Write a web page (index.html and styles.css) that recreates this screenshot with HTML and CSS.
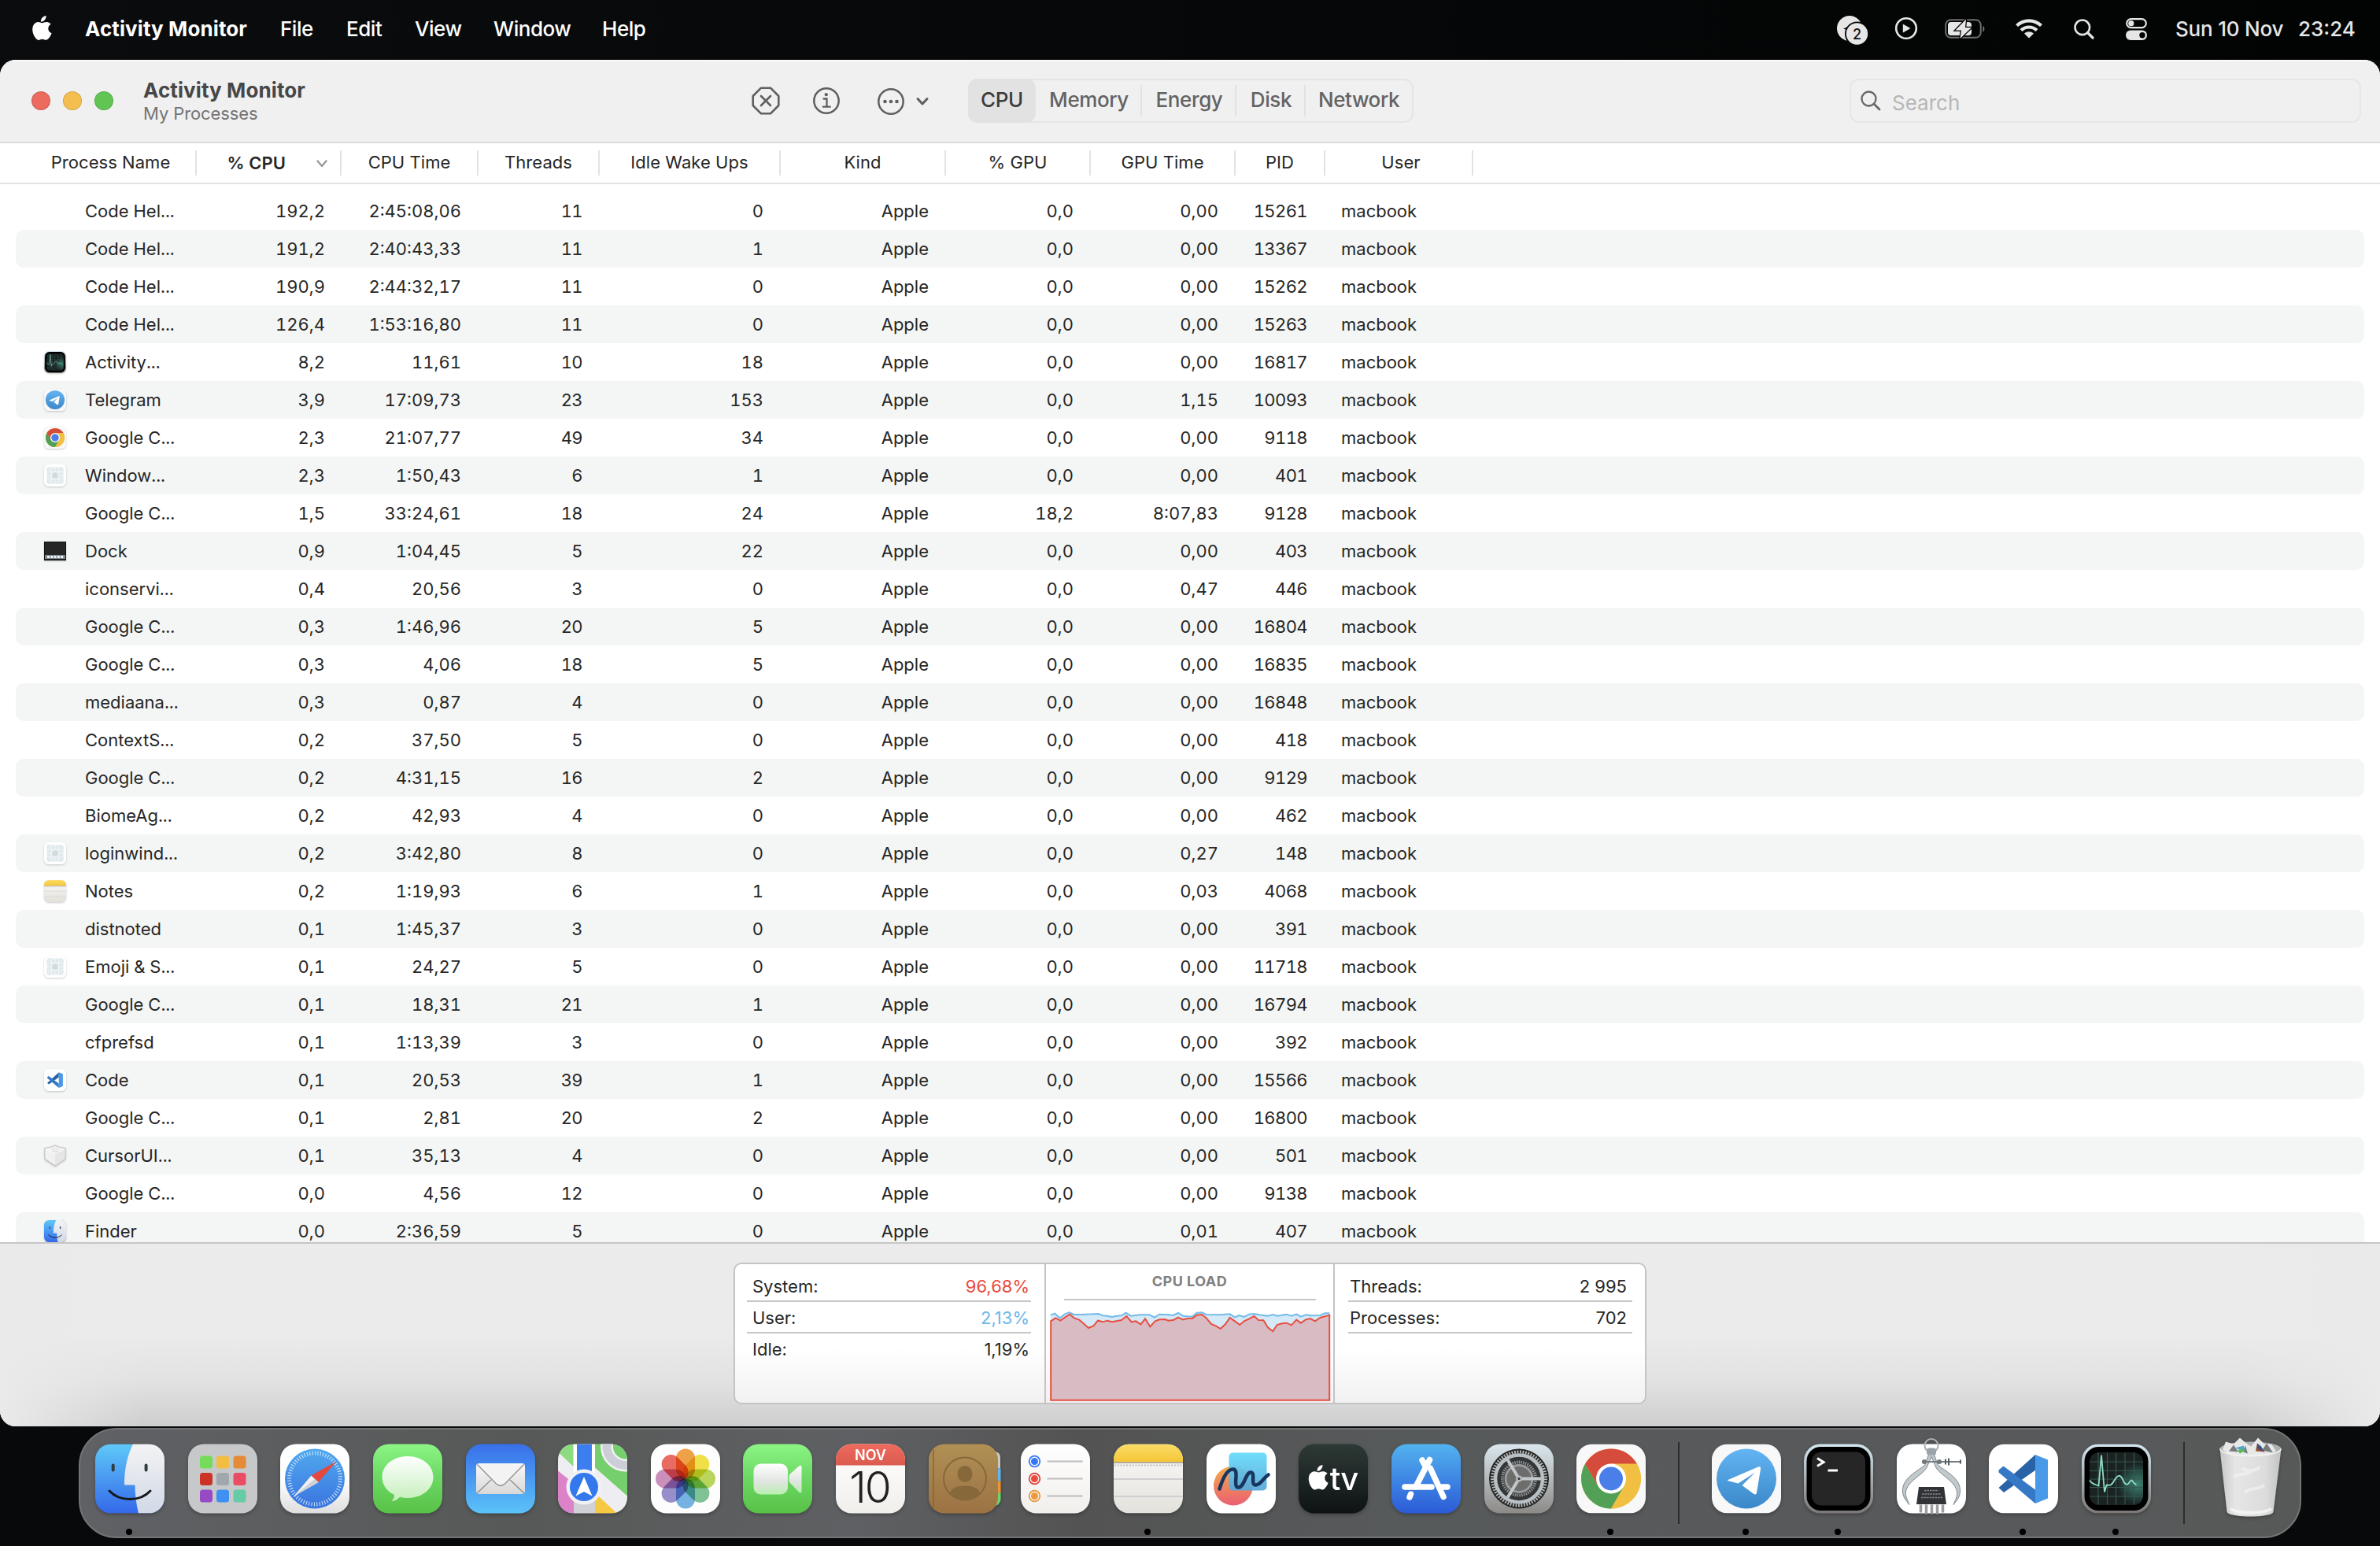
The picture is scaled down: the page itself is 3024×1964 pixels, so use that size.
FILE: index.html
```html
<!DOCTYPE html>
<html lang="en">
<head>
<meta charset="utf-8">
<title>Activity Monitor</title>
<link rel="stylesheet" href="styles.css">
</head>
<body>
<svg class="defs" width="0" height="0" aria-hidden="true">
  <defs>
    <linearGradient id="gFinder" x1="0" y1="0" x2="0" y2="1"><stop offset="0" stop-color="#5fc9f8"/><stop offset="1" stop-color="#3468ea"/></linearGradient>
    <linearGradient id="gFace" x1="0" y1="0" x2="0" y2="1"><stop offset="0" stop-color="#f3f3f4"/><stop offset="1" stop-color="#d0d9e6"/></linearGradient>
    <linearGradient id="gWhite" x1="0" y1="0" x2="0" y2="1"><stop offset=".5" stop-color="#fff"/><stop offset="1" stop-color="#dedede"/></linearGradient>
    <linearGradient id="gPaper" x1="0" y1="0" x2="0" y2="1"><stop offset="0" stop-color="#fff"/><stop offset="1" stop-color="#f1efec"/></linearGradient>
    <linearGradient id="gBlue" x1="0" y1="0" x2="0" y2="1"><stop offset="0" stop-color="#51a9ee"/><stop offset="1" stop-color="#3a74e0"/></linearGradient>
    <linearGradient id="gGreen" x1="0" y1="0" x2="0" y2="1"><stop offset="0" stop-color="#8cf584"/><stop offset=".5" stop-color="#6bd863"/><stop offset="1" stop-color="#58c147"/></linearGradient>
    <linearGradient id="gBubble" x1="0" y1="0" x2="0" y2="1"><stop offset="0" stop-color="#fff"/><stop offset="1" stop-color="#c4efba"/></linearGradient>
    <linearGradient id="gCam" x1="0" y1="0" x2="0" y2="1"><stop offset="0" stop-color="#fff"/><stop offset=".6" stop-color="#dfe4df"/><stop offset="1" stop-color="#b9f0b0"/></linearGradient>
    <linearGradient id="gMail" x1="0" y1="0" x2="0" y2="1"><stop offset="0" stop-color="#386fe9"/><stop offset="1" stop-color="#5bc3f9"/></linearGradient>
    <linearGradient id="gEnv" x1="0" y1="0" x2="0" y2="1"><stop offset="0" stop-color="#f8f8f8"/><stop offset="1" stop-color="#d8d8d8"/></linearGradient>
    <linearGradient id="gCal" x1="0" y1="0" x2="0" y2="1"><stop offset="0" stop-color="#ee6a5c"/><stop offset="1" stop-color="#da5b4f"/></linearGradient>
    <linearGradient id="gBook" x1="0" y1="0" x2="0" y2="1"><stop offset="0" stop-color="#b09055"/><stop offset="1" stop-color="#9c7243"/></linearGradient>
    <linearGradient id="gNote" x1="0" y1="0" x2="0" y2="1"><stop offset="0" stop-color="#fbdc68"/><stop offset="1" stop-color="#f5c636"/></linearGradient>
    <linearGradient id="gNotePaper" x1="0" y1="0" x2="0" y2="1"><stop offset="0" stop-color="#fbfaf9"/><stop offset="1" stop-color="#e2e1dc"/></linearGradient>
    <linearGradient id="gBoard" x1="0" y1="0" x2="0" y2="1"><stop offset="0" stop-color="#66dbfb"/><stop offset="1" stop-color="#57a7d8"/></linearGradient>
    <linearGradient id="gBlob" x1="0" y1="0" x2="0" y2="1"><stop offset="0" stop-color="#f4ab4a"/><stop offset="1" stop-color="#ea5f72"/></linearGradient>
    <linearGradient id="gTv" x1="0" y1="0" x2="0" y2="1"><stop offset="0" stop-color="#2e3a36"/><stop offset="1" stop-color="#0e1214"/></linearGradient>
    <linearGradient id="gStore" x1="0" y1="0" x2="0" y2="1"><stop offset="0" stop-color="#52b3ef"/><stop offset="1" stop-color="#2b5bd7"/></linearGradient>
    <linearGradient id="gGear" x1="0" y1="0" x2="0" y2="1"><stop offset="0" stop-color="#dbe7ee"/><stop offset="1" stop-color="#8c8a87"/></linearGradient>
    <linearGradient id="gTg" x1="0" y1="0" x2="0" y2="1"><stop offset="0" stop-color="#62b4f2"/><stop offset="1" stop-color="#3b88c9"/></linearGradient>
    <linearGradient id="gFrame" x1="0" y1="0" x2="0" y2="1"><stop offset="0" stop-color="#d3e6f0"/><stop offset="1" stop-color="#7b7675"/></linearGradient>
    <linearGradient id="gBin" x1="0" y1="0" x2="1" y2="0"><stop offset="0" stop-color="#c6c6c8"/><stop offset=".25" stop-color="#e6e6e7"/><stop offset=".75" stop-color="#dcdcdd"/><stop offset="1" stop-color="#c2c2c4"/></linearGradient>
    <radialGradient id="gGlow" cx=".9" cy=".6" r=".4"><stop offset="0" stop-color="#3b8374"/><stop offset="1" stop-color="#1a2222"/></radialGradient>

    <path id="applePath" d="M17.6 0c.2 2-.6 3.900-1.800 5.300-1.200 1.400-3.100 2.400-4.900 2.300-.2-1.900.7-3.900 1.800-5.100C14 1.100 16 .1 17.600 0zM23.600 10.700c-2 1.200-3.300 3-3.300 5.500 0 2.900 1.700 5 4.300 6-.6 1.800-1.500 3.500-2.600 5-1.500 2.200-3 3.600-4.700 3.600-1.800 0-2.400-1.100-4.600-1.100-2.200 0-2.900 1.100-4.600 1.200-1.800.1-3.400-1.700-4.800-3.800C.5 23-.8 16.400 1.300 12.300 2.500 9.700 5 8.100 7.500 8.100c2 0 3.700 1.200 5.100 1.200 1.300 0 3.400-1.400 5.900-1.200 1.900.1 3.800.9 5.100 2.600z"/>

    <symbol id="finder" viewBox="0 0 88 88">
      <rect width="88" height="88" rx="20" fill="url(#gFinder)"/>
      <path d="M48 0h20a20 20 0 0 1 20 20v48a20 20 0 0 1-20 20H55c-3-12-4.500-24-4.500-36H38.500c-2 0-1.500-2-1.500-4C37.500 30 41 14 48 0z" fill="url(#gFace)"/>
      <path d="M22.700 27v6M64.600 27v6" stroke="#333b42" stroke-width="4" stroke-linecap="round"/>
      <path d="M18 59.500c13 14 39 14 52 0" fill="none" stroke="#16181c" stroke-width="3" stroke-linecap="round"/>
    </symbol>
    <symbol id="telegram" viewBox="0 0 88 88">
      <rect width="88" height="88" rx="20" fill="#f8f8f8"/>
      <circle cx="44" cy="44" r="38" fill="url(#gTg)"/>
      <path d="M20.500 45.500 59 29c2-1 3.500.3 3 2.800l-5 30c-.5 2.400-2 2.800-3.800 1.500L38.500 52.500 55 36 33.500 50l-12.500-3.300c-1-.3-1.300-.9-.5-1.200z" fill="#fff"/>
    </symbol>
    <symbol id="chrome" viewBox="0 0 88 88">
      <rect width="88" height="88" rx="20" fill="#f8f8f8"/>
      <circle cx="44" cy="44" r="38" fill="#f1bf42"/>
      <path d="M44 44 11.100 25A38 38 0 0 1 76.900 25z" fill="#d64c3c"/>
      <path d="M11.100 25A38 38 0 0 0 44 82l16.500-28.500L44 44l-16.500 9.500z" fill="#529f56"/>
      <path d="M44 82a38 38 0 0 0 32.900-57H44v19l16.500 9.500z" fill="#f1bf42"/>
      <path d="M11.100 25 27.500 53.500 44 44V25z" fill="#d64c3c"/>
      <circle cx="44" cy="44" r="19" fill="#fff"/><circle cx="44" cy="44" r="15" fill="#4a7ee8"/>
    </symbol>
    <symbol id="notes" viewBox="0 0 88 88">
      <rect width="88" height="88" rx="20" fill="url(#gNotePaper)"/>
      <path d="M0 23v-3A20 20 0 0 1 20 0h48a20 20 0 0 1 20 20v3z" fill="url(#gNote)"/>
      <path d="M0 23.500h88" stroke="#9c9688" stroke-width="1.500"/>
      <path d="M1 27h86" stroke="#b9b9b7" stroke-width="1.800" stroke-dasharray="1.800 2"/>
      <path d="M0 44.500h88M0 66.500h88" stroke="#cfcfd2" stroke-width="1.800"/>
    </symbol>
    <symbol id="vscode" viewBox="0 0 88 88">
      <rect width="88" height="88" rx="20" fill="#fff"/>
      <path d="M12.500 55.500 59 13.500v19.700L19 61.500z" fill="#2962a6"/>
      <path d="M12.500 33 18.500 28 59 58v17.500L12.500 36z" fill="#3478c6"/>
      <path d="M59 13.500 75 20v49l-16 6.500z" fill="#489ae9"/>
    </symbol>
    <symbol id="monitor" viewBox="0 0 88 88">
      <rect width="88" height="88" rx="21" fill="url(#gFrame)"/>
      <rect x="3.500" y="3.500" width="81" height="81" rx="18" fill="#000"/>
      <rect x="10" y="10.500" width="68" height="67" rx="12" fill="url(#gGlow)"/>
      <path d="M21 11v66M32.500 11v66M43.500 11v66M55 11v66M66.500 11v66M10 22.500h68M10 34h68M10 44.500h68M10 55h68M10 66.500h68" stroke="#36584f" stroke-width="1.200"/>
      <path d="M10 46c3 5 6 5 11.500 7L25 14l4 47 2.500-9c5 1 7 0 10-6 5-8 8-8 12 2 3 5 5 4 8-.5 3-5 4 4 8 4" fill="none" stroke="#8fdcc6" stroke-width="1.800"/>
    </symbol>
    <symbol id="generic" viewBox="0 0 28 28">
      <rect width="28" height="28" rx="6" fill="#fff"/>
      <rect x="3.500" y="3.500" width="21" height="21" rx="1.500" fill="#dde6e9"/>
      <g fill="none" stroke="#f3f8f9" stroke-width=".8"><circle cx="14" cy="14" r="9.500"/><circle cx="14" cy="14" r="6"/><path d="M3.500 9.500h21M3.500 18.500h21M9.500 3.500v21M18.500 3.500v21M14 3.500v21M3.500 14h21M3.500 3.500l21 21M24.500 3.500l-21 21"/></g>
      <circle cx="14" cy="14" r="3.600" fill="#cfdcdf"/>
    </symbol>
    <symbol id="dockproc" viewBox="0 0 28 28">
      <rect x=".5" y="2.500" width="27" height="23" fill="#262627" stroke="#111"/>
      <rect x="1" y="19" width="26" height="5" fill="#7c848c"/>
      <path d="M4 21.500h21" stroke="#f1f4f6" stroke-width="3" stroke-dasharray="3 1.300"/>
    </symbol>
    <symbol id="brick" viewBox="0 0 30 30">
      <path d="M1 5 11 3l4-2 4 2 10 2v14.500L15 29 1 19.500z" fill="#f1f1f1" stroke="#c4c4c4" stroke-width="1.200" stroke-linejoin="round"/>
      <path d="M15 12v16.500L28 19V6z" fill="#e6e6e6"/><path d="M2 6 15 12 28 6" fill="none" stroke="#fff"/>
      <ellipse cx="15" cy="8" rx="4.500" ry="2.500" fill="#d9d9d9"/><path d="M11 4v4c2 2 6 2 8 0V4z" fill="#ececec"/>
    </symbol>
  </defs>
</svg>

<header class="menubar">
  <svg class="apple" viewBox="0 0 26 31"><use href="#applePath" fill="#fff"/></svg>
  <nav class="menus"><b class="m-app">Activity Monitor</b><span class="m-file">File</span><span class="m-edit">Edit</span><span class="m-view">View</span><span class="m-window">Window</span><span>Help</span></nav>
  <div class="status">
    <svg class="s-tg" viewBox="0 0 42 38"><circle cx="17" cy="17" r="16" fill="#e6e6e6"/><path d="M9 17.500 26 10.500l-3 9-5 1-1 6-2-7z" fill="#050505"/><circle cx="26.500" cy="24" r="15.500" fill="#050505"/><circle cx="26.500" cy="24" r="13.700" fill="#e6e6e6"/><text x="26.500" y="30.500" text-anchor="middle" font-size="18" class="svgtext" fill="#111">2</text></svg>
    <svg class="s-play" viewBox="0 0 30 30"><circle cx="15" cy="15" r="12.800" fill="none" stroke="#e6e6e6" stroke-width="2.600"/><path d="M10.800 9.500v11L20.500 15z" fill="#e6e6e6"/></svg>
    <svg class="s-bat" viewBox="0 0 52 26"><rect x="1.200" y="1.200" width="44.500" height="22.600" rx="6.500" fill="none" stroke="#6f6f6f" stroke-width="2"/><path d="M48.500 9v7.500c2.500-.8 2.500-6.700 0-7.500z" fill="#7c7c7c"/><rect x="4" y="4" width="30" height="17" rx="4" fill="#e6e6e6"/><path d="M27 .5 13.500 14.500h7.500L19.500 25 34 11h-8z" fill="#e6e6e6" stroke="#050505" stroke-width="2.600" paint-order="stroke"/></svg>
    <svg class="s-wifi" viewBox="0 0 36 26"><path d="M2.500 9.500a22.500 22.500 0 0 1 31 0M8 15.500a14.500 14.500 0 0 1 20 0" fill="none" stroke="#e6e6e6" stroke-width="4.200"/><path d="M12 19.600a9 9 0 0 1 12 0l-6 6z" fill="#e6e6e6"/></svg>
    <svg class="s-find" viewBox="0 0 26 26"><circle cx="10.800" cy="10.800" r="9.300" fill="none" stroke="#e6e6e6" stroke-width="2.600"/><path d="m17.500 17.500 6.500 6.500" stroke="#e6e6e6" stroke-width="3.200" stroke-linecap="round"/></svg>
    <svg class="s-cc" viewBox="0 0 27 28"><rect x="1.200" y="1.200" width="24.600" height="11" rx="5.500" fill="none" stroke="#e6e6e6" stroke-width="2.200"/><circle cx="6.800" cy="6.700" r="3.600" fill="#e6e6e6"/><rect y="15.500" width="27" height="12.500" rx="6.200" fill="#e6e6e6"/><circle cx="21" cy="21.700" r="3.700" fill="#050505"/></svg>
    <span class="date">Sun 10 Nov</span><span class="time">23:24</span>
  </div>
</header>

<main class="window">
  <div class="toolbar">
    <div class="lights"><i class="red"></i><i class="yellow"></i><i class="green"></i></div>
    <div class="titles"><h1>Activity Monitor</h1><p>My Processes</p></div>
    <div class="actions">
      <svg class="a-stop" viewBox="0 0 36 36"><path d="M12 1.700h12L34.300 12v12L24 34.300H12L1.700 24V12z" fill="none" stroke="#5f5f5f" stroke-width="2.600" stroke-linejoin="round"/><path d="m12 12 12 12M24 12 12 24" stroke="#5f5f5f" stroke-width="2.600" stroke-linecap="round"/></svg>
      <svg class="a-info" viewBox="0 0 36 36"><circle cx="18" cy="18" r="15.700" fill="none" stroke="#5f5f5f" stroke-width="2.500"/><circle cx="17.800" cy="10.200" r="2.100" fill="#5f5f5f"/><path d="M14.500 15.500h4v10M13.800 25.700h9" fill="none" stroke="#5f5f5f" stroke-width="2.300" stroke-linecap="round"/></svg>
      <svg class="a-more" viewBox="0 0 36 36"><circle cx="18" cy="18" r="15.700" fill="none" stroke="#5f5f5f" stroke-width="2.500"/><g fill="#5f5f5f"><circle cx="10.500" cy="18" r="2.300"/><circle cx="18" cy="18" r="2.300"/><circle cx="25.500" cy="18" r="2.300"/></g></svg>
      <svg class="a-chev" viewBox="0 0 16 12"><path d="m2 2.500 6 6.500 6-6.500" fill="none" stroke="#5f5f5f" stroke-width="3" stroke-linecap="round" stroke-linejoin="round"/></svg>
    </div>
    <div class="tabs"><span class="t-cpu">CPU</span><span class="t-mem">Memory</span><span class="t-en">Energy</span><span class="t-disk">Disk</span><span class="t-net">Network</span></div>
    <div class="search"><svg viewBox="0 0 26 26"><circle cx="10.500" cy="10.500" r="9" fill="none" stroke="#666" stroke-width="2.300"/><path d="m17 17 7 7" stroke="#666" stroke-width="2.800" stroke-linecap="round"/></svg><span>Search</span></div>
  </div>

  <div class="thead">
    <span class="h-name">Process Name</span><span class="h-sort"><b>% CPU</b><svg viewBox="0 0 14 10"><path d="m1.500 1.500 5.500 6.500 5.500-6.500" fill="none" stroke="#9a9a9a" stroke-width="2.400" stroke-linecap="round" stroke-linejoin="round"/></svg></span><span>CPU Time</span><span>Threads</span><span>Idle Wake Ups</span><span>Kind</span><span>% GPU</span><span>GPU Time</span><span>PID</span><span class="h-user">User</span>
  </div>

  <div class="rows">
    <div class="row"><div class="name"><i></i>Code Hel...</div><span>192,2</span><span>2:45:08,06</span><span>11</span><span>0</span><span>Apple</span><span>0,0</span><span>0,00</span><span>15261</span><em>macbook</em></div>
    <div class="row"><div class="name"><i></i>Code Hel...</div><span>191,2</span><span>2:40:43,33</span><span>11</span><span>1</span><span>Apple</span><span>0,0</span><span>0,00</span><span>13367</span><em>macbook</em></div>
    <div class="row"><div class="name"><i></i>Code Hel...</div><span>190,9</span><span>2:44:32,17</span><span>11</span><span>0</span><span>Apple</span><span>0,0</span><span>0,00</span><span>15262</span><em>macbook</em></div>
    <div class="row"><div class="name"><i></i>Code Hel...</div><span>126,4</span><span>1:53:16,80</span><span>11</span><span>0</span><span>Apple</span><span>0,0</span><span>0,00</span><span>15263</span><em>macbook</em></div>
    <div class="row"><div class="name"><i><svg><use href="#monitor"/></svg></i>Activity...</div><span>8,2</span><span>11,61</span><span>10</span><span>18</span><span>Apple</span><span>0,0</span><span>0,00</span><span>16817</span><em>macbook</em></div>
    <div class="row"><div class="name"><i><svg><use href="#telegram"/></svg></i>Telegram</div><span>3,9</span><span>17:09,73</span><span>23</span><span>153</span><span>Apple</span><span>0,0</span><span>1,15</span><span>10093</span><em>macbook</em></div>
    <div class="row"><div class="name"><i><svg><use href="#chrome"/></svg></i>Google C...</div><span>2,3</span><span>21:07,77</span><span>49</span><span>34</span><span>Apple</span><span>0,0</span><span>0,00</span><span>9118</span><em>macbook</em></div>
    <div class="row"><div class="name"><i><svg><use href="#generic"/></svg></i>Window...</div><span>2,3</span><span>1:50,43</span><span>6</span><span>1</span><span>Apple</span><span>0,0</span><span>0,00</span><span>401</span><em>macbook</em></div>
    <div class="row"><div class="name"><i></i>Google C...</div><span>1,5</span><span>33:24,61</span><span>18</span><span>24</span><span>Apple</span><span>18,2</span><span>8:07,83</span><span>9128</span><em>macbook</em></div>
    <div class="row"><div class="name"><i><svg><use href="#dockproc"/></svg></i>Dock</div><span>0,9</span><span>1:04,45</span><span>5</span><span>22</span><span>Apple</span><span>0,0</span><span>0,00</span><span>403</span><em>macbook</em></div>
    <div class="row"><div class="name"><i></i>iconservi...</div><span>0,4</span><span>20,56</span><span>3</span><span>0</span><span>Apple</span><span>0,0</span><span>0,47</span><span>446</span><em>macbook</em></div>
    <div class="row"><div class="name"><i></i>Google C...</div><span>0,3</span><span>1:46,96</span><span>20</span><span>5</span><span>Apple</span><span>0,0</span><span>0,00</span><span>16804</span><em>macbook</em></div>
    <div class="row"><div class="name"><i></i>Google C...</div><span>0,3</span><span>4,06</span><span>18</span><span>5</span><span>Apple</span><span>0,0</span><span>0,00</span><span>16835</span><em>macbook</em></div>
    <div class="row"><div class="name"><i></i>mediaana...</div><span>0,3</span><span>0,87</span><span>4</span><span>0</span><span>Apple</span><span>0,0</span><span>0,00</span><span>16848</span><em>macbook</em></div>
    <div class="row"><div class="name"><i></i>ContextS...</div><span>0,2</span><span>37,50</span><span>5</span><span>0</span><span>Apple</span><span>0,0</span><span>0,00</span><span>418</span><em>macbook</em></div>
    <div class="row"><div class="name"><i></i>Google C...</div><span>0,2</span><span>4:31,15</span><span>16</span><span>2</span><span>Apple</span><span>0,0</span><span>0,00</span><span>9129</span><em>macbook</em></div>
    <div class="row"><div class="name"><i></i>BiomeAg...</div><span>0,2</span><span>42,93</span><span>4</span><span>0</span><span>Apple</span><span>0,0</span><span>0,00</span><span>462</span><em>macbook</em></div>
    <div class="row"><div class="name"><i><svg><use href="#generic"/></svg></i>loginwind...</div><span>0,2</span><span>3:42,80</span><span>8</span><span>0</span><span>Apple</span><span>0,0</span><span>0,27</span><span>148</span><em>macbook</em></div>
    <div class="row"><div class="name"><i><svg><use href="#notes"/></svg></i>Notes</div><span>0,2</span><span>1:19,93</span><span>6</span><span>1</span><span>Apple</span><span>0,0</span><span>0,03</span><span>4068</span><em>macbook</em></div>
    <div class="row"><div class="name"><i></i>distnoted</div><span>0,1</span><span>1:45,37</span><span>3</span><span>0</span><span>Apple</span><span>0,0</span><span>0,00</span><span>391</span><em>macbook</em></div>
    <div class="row"><div class="name"><i><svg><use href="#generic"/></svg></i>Emoji &amp; S...</div><span>0,1</span><span>24,27</span><span>5</span><span>0</span><span>Apple</span><span>0,0</span><span>0,00</span><span>11718</span><em>macbook</em></div>
    <div class="row"><div class="name"><i></i>Google C...</div><span>0,1</span><span>18,31</span><span>21</span><span>1</span><span>Apple</span><span>0,0</span><span>0,00</span><span>16794</span><em>macbook</em></div>
    <div class="row"><div class="name"><i></i>cfprefsd</div><span>0,1</span><span>1:13,39</span><span>3</span><span>0</span><span>Apple</span><span>0,0</span><span>0,00</span><span>392</span><em>macbook</em></div>
    <div class="row"><div class="name"><i><svg><use href="#vscode"/></svg></i>Code</div><span>0,1</span><span>20,53</span><span>39</span><span>1</span><span>Apple</span><span>0,0</span><span>0,00</span><span>15566</span><em>macbook</em></div>
    <div class="row"><div class="name"><i></i>Google C...</div><span>0,1</span><span>2,81</span><span>20</span><span>2</span><span>Apple</span><span>0,0</span><span>0,00</span><span>16800</span><em>macbook</em></div>
    <div class="row"><div class="name"><i><svg><use href="#brick"/></svg></i>CursorUI...</div><span>0,1</span><span>35,13</span><span>4</span><span>0</span><span>Apple</span><span>0,0</span><span>0,00</span><span>501</span><em>macbook</em></div>
    <div class="row"><div class="name"><i></i>Google C...</div><span>0,0</span><span>4,56</span><span>12</span><span>0</span><span>Apple</span><span>0,0</span><span>0,00</span><span>9138</span><em>macbook</em></div>
    <div class="row"><div class="name"><i><svg><use href="#finder"/></svg></i>Finder</div><span>0,0</span><span>2:36,59</span><span>5</span><span>0</span><span>Apple</span><span>0,0</span><span>0,01</span><span>407</span><em>macbook</em></div>
  </div>

  <footer class="summary">
    <div class="card">
      <div class="stats left">
        <div class="stat"><span>System:</span><span class="sys">96,68%</span></div>
        <div class="stat"><span>User:</span><span class="usr">2,13%</span></div>
        <div class="stat last"><span>Idle:</span><span>1,19%</span></div>
      </div>
      <div class="load">
        <h2>CPU LOAD</h2>
        <svg viewBox="549 318 450 342" preserveAspectRatio="none">
          <path d="M550 332 557 326 565 343 573 328 580 322 588 330 600 330 627 327 634 334 641 335 649 339 656 335 664 334 671 323 679 335 694 331 709 331 717 341 725 329 740 331 747 333 755 324 763 335 777 338 785 323 793 322 800 330 823 331 838 328 846 340 853 333 861 339 869 329 877 327 885 331 899 335 907 330 914 335 929 329 937 335 945 329 952 338 960 331 968 334 983 333 991 325 998 325V658H550z" fill="#d5e9f7"/>
          <path d="M550 332 557 326 565 343 573 328 580 322 588 330 600 330 627 327 634 334 641 335 649 339 656 335 664 334 671 323 679 335 694 331 709 331 717 341 725 329 740 331 747 333 755 324 763 335 777 338 785 323 793 322 800 330 823 331 838 328 846 340 853 333 861 339 869 329 877 327 885 331 899 335 907 330 914 335 929 329 937 335 945 329 952 338 960 331 968 334 983 333 991 325 998 325" class="line blue"/>
          <path d="M550.500 355 558 343 566 353 573 341 581 329 588 343 596 350 604 366 611 381 619 373 626 353 634 358 641 353 649 358 664 351 672 336 680 358 687 355 695 367 702 346 710 376 718 355 725 349 733 348 740 353 748 350 755 341 763 349 770 345 778 344 785 332 793 330 800 343 808 366 816 374 823 384 831 366 838 342 846 355 854 369 861 355 869 346 877 336 884 351 892 352 899 379 907 394 914 369 922 364 929 362 937 370 945 350 952 362 960 349 967 345 975 355 983 342 991 337 998 332V656.500H550.500z" fill="#d9bcc3" class="line crimson"/>
        </svg>
      </div>
      <div class="stats right">
        <div class="stat"><span>Threads:</span><span>2 995</span></div>
        <div class="stat"><span>Processes:</span><span>702</span></div>
      </div>
    </div>
  </footer>
</main>

<div class="dock">
  <div class="app on"><svg viewBox="0 0 88 88"><use href="#finder"/></svg></div>
  <div class="app"><svg viewBox="0 0 88 88"><rect width="88" height="88" rx="20" fill="#c7c8ca"/><rect x="15" y="15" width="16" height="16" rx="3.500" fill="#76db59"/><rect x="36" y="15" width="16" height="16" rx="3.500" fill="#f3bd42"/><rect x="57.500" y="15" width="16" height="16" rx="3.500" fill="#e58a36"/><rect x="15" y="36.500" width="16" height="16" rx="3.500" fill="#cc3327"/><rect x="36" y="36.500" width="16" height="16" rx="3.500" fill="#a0a8ad"/><rect x="57.500" y="36.500" width="16" height="16" rx="3.500" fill="#ea4d63"/><rect x="15" y="58" width="16" height="16" rx="3.500" fill="#964ac5"/><rect x="36" y="58" width="16" height="16" rx="3.500" fill="#3f91f1"/><rect x="57.500" y="58" width="16" height="16" rx="3.500" fill="#67cba7"/></svg></div>
  <div class="app"><svg viewBox="0 0 88 88"><rect width="88" height="88" rx="20" fill="url(#gWhite)"/><circle cx="44" cy="44" r="38" fill="url(#gBlue)"/><circle cx="44" cy="44" r="32.500" fill="none" stroke="#d5e9fb" stroke-width="5" stroke-dasharray="1 2.400"/><path d="M71.500 22 48.500 48.500 39.500 40z" fill="#e4493b"/><path d="M17 66.500 39.500 40l9 8.500z" fill="#f1f1f1"/><path d="M17 66.500 44 44.300l4.500 4.200z" fill="#cfd2d6"/></svg></div>
  <div class="app"><svg viewBox="0 0 88 88"><rect width="88" height="88" rx="20" fill="url(#gGreen)"/><path d="M44 15.500c18.500 0 32.500 11.500 32.500 26.500S62.500 68.500 44 68.500c-3.500 0-6.800-.4-9.900-1.200-2.700 3-6.300 5-10.600 5.400 2.300-2.400 3.500-5 3.600-8.200C17.500 60 11.500 51.500 11.500 42c0-15 14-26.500 32.500-26.500z" fill="url(#gBubble)"/></svg></div>
  <div class="app"><svg viewBox="0 0 88 88"><rect width="88" height="88" rx="20" fill="url(#gMail)"/><rect x="13" y="24.500" width="62" height="39" rx="4" fill="url(#gEnv)"/><path d="m14 62.500 18-17M74 62.500l-18-17" stroke="#8f8f8f" stroke-width="1.300"/><path d="m14.500 26 24 24.500c3.500 3 7.500 3 11 0l24-24.500" fill="#f3f3f3" stroke="#979797" stroke-width="1.500"/></svg></div>
  <div class="app"><svg viewBox="0 0 88 88"><clipPath id="mapClip"><rect width="88" height="88" rx="20"/></clipPath><g clip-path="url(#mapClip)"><rect width="88" height="88" fill="#eeeef2"/><path d="M0 0h20v29L0 10z" fill="#8ddb80"/><path d="M46 0h42v66L46 29z" fill="#76cf6d"/><path d="M0 34 20 50v38H0z" fill="#dc82c8"/><path d="M47 62l28 26H47z" fill="#f5ca42"/><path d="M20 50h27v38H20z" fill="#cfd1d6"/><path d="M19.500 0H47v50H19.500z" fill="#fff"/><path d="M24 0h19v45H24z" fill="#3c7df0"/><circle cx="86" cy="3" r="24" fill="none" stroke="#f1f1f4" stroke-width="16"/><circle cx="86" cy="3" r="24" fill="none" stroke="#cdcfd8" stroke-width="11"/></g><circle cx="33" cy="54.500" r="22.500" fill="#f0f1f5"/><circle cx="33" cy="54.500" r="18" fill="#3478ee"/><path d="M33 41.500 43.500 66 33 60.500 22.500 66z" fill="#fff"/></svg></div>
  <div class="app"><svg viewBox="0 0 88 88"><rect width="88" height="88" rx="20" fill="#fdfdfd"/><g class="petals"><rect x="32" y="6" width="24" height="38" rx="12" fill="#f09a37"/><rect x="32" y="6" width="24" height="38" rx="12" fill="#f0e03a" transform="rotate(45 44 44)"/><rect x="32" y="6" width="24" height="38" rx="12" fill="#b5d44f" transform="rotate(90 44 44)"/><rect x="32" y="6" width="24" height="38" rx="12" fill="#74bf8d" transform="rotate(135 44 44)"/><rect x="32" y="6" width="24" height="38" rx="12" fill="#6aaee2" transform="rotate(180 44 44)"/><rect x="32" y="6" width="24" height="38" rx="12" fill="#8f86c8" transform="rotate(225 44 44)"/><rect x="32" y="6" width="24" height="38" rx="12" fill="#c886b8" transform="rotate(270 44 44)"/><rect x="32" y="6" width="24" height="38" rx="12" fill="#ea6055" transform="rotate(315 44 44)"/></g></svg></div>
  <div class="app"><svg viewBox="0 0 88 88"><rect width="88" height="88" rx="20" fill="url(#gGreen)"/><rect x="13.500" y="25" width="43.500" height="39" rx="9" fill="url(#gCam)"/><path d="M58.500 42c0-2 .5-3 2-4.500L71 28c2-1.500 3.500-1 3.500 1v31c0 2-1.500 2.500-3.500 1L60.500 50c-1.500-1.500-2-2.500-2-4z" fill="url(#gCam)"/></svg></div>
  <div class="app"><svg viewBox="0 0 88 88"><rect width="88" height="88" rx="20" fill="url(#gPaper)"/><path d="M0 27v-7A20 20 0 0 1 20 0h48a20 20 0 0 1 20 20v7z" fill="url(#gCal)"/><text x="44" y="20.500" text-anchor="middle" class="svgtext nov">NOV</text><text x="43" y="74" text-anchor="middle" class="svgtext ten">10</text></svg></div>
  <div class="app"><svg viewBox="0 0 88 88"><path d="M78 10h8c3 1 5 3 5 7v14H78z" fill="#c9c8c2"/><path d="M78 31h13.500v16H78z" fill="#62b5ee"/><path d="M78 47h13.500v15H78z" fill="#ef9432"/><path d="M78 62h13.500v7c0 5-3 8-5.500 9h-8z" fill="#6ed565"/><rect width="88" height="88" rx="20" fill="url(#gBook)"/><path d="M6 7v74" stroke="#886538" stroke-width="1.500"/><circle cx="46" cy="44" r="27" fill="none" stroke="#86683a" stroke-width="2"/><ellipse cx="46" cy="38" rx="9.500" ry="10.500" fill="#86683a"/><path d="M27 62c2-6 9-9 19-9s17 3 19 9c-9 12-29 12-38 0z" fill="#86683a"/></svg></div>
  <div class="app"><svg viewBox="0 0 88 88"><rect width="88" height="88" rx="20" fill="url(#gPaper)"/><g fill="none" stroke-width="1.800"><circle cx="17.500" cy="22" r="6.800" stroke="#3478f6"/><circle cx="17.500" cy="44" r="6.800" stroke="#dd4437"/><circle cx="17.500" cy="66" r="6.800" stroke="#e8963a"/></g><circle cx="17.500" cy="22" r="4.500" fill="#3478f6"/><circle cx="17.500" cy="44" r="4.500" fill="#ea4b3c"/><circle cx="17.500" cy="66" r="4.500" fill="#ef9a38"/><path d="M33.500 22h45M33.500 44h45M33.500 66h45" stroke="#bcbcbd" stroke-width="2"/></svg></div>
  <div class="app on"><svg viewBox="0 0 88 88"><use href="#notes"/></svg></div>
  <div class="app"><svg viewBox="0 0 88 88"><rect width="88" height="88" rx="20" fill="#fff"/><circle cx="34" cy="53" r="25" fill="url(#gBlob)"/><rect x="28.500" y="11" width="48" height="48" rx="5" fill="url(#gBoard)" opacity=".93"/><path d="M16.500 57c4-13 10-25 17-25 9 0-1 23 7 23 8 0 9-20 16-19 6 1-1 16 6 16 6 0 9-8 16-13" fill="none" stroke="#17355e" stroke-width="4.500" stroke-linecap="round" stroke-linejoin="round"/></svg></div>
  <div class="app"><svg viewBox="0 0 88 88"><rect width="88" height="88" rx="20" fill="url(#gTv)"/><use href="#applePath" fill="#fff" transform="translate(12.500 26.500) scale(1.020)"/><text x="57.500" y="58" text-anchor="middle" class="svgtext tv">tv</text></svg></div>
  <div class="app"><svg viewBox="0 0 88 88"><rect width="88" height="88" rx="20" fill="url(#gStore)"/><g stroke="#fff" stroke-width="7.500" stroke-linecap="round"><path d="M39 20.500 43 28M49.500 31 66 67M48.500 20 32 52M24.500 63.500l-1.500 4M17 54.500h34M64 54.500h7"/></g></svg></div>
  <div class="app"><svg viewBox="0 0 88 88"><rect width="88" height="88" rx="20" fill="url(#gGear)"/><circle cx="44" cy="44" r="38" fill="#252525"/><circle cx="44" cy="44" r="34" fill="none" stroke="#b9bcbd" stroke-width="4" stroke-dasharray="1.800 1.700"/><circle cx="44" cy="44" r="30" fill="#333536" stroke="#b9c0c3" stroke-width="4.500"/><circle cx="44" cy="44" r="21" fill="none" stroke="#92979a" stroke-width="4" stroke-dasharray="1.500 1.300"/><circle cx="44" cy="44" r="17" fill="#6d6d6c" stroke="#999c9e" stroke-width="3"/><path d="M44 44h28M44 44 29.500 20M44 44 29.500 68" stroke="#c2c7c9" stroke-width="4"/><circle cx="44" cy="44" r="4" fill="#b3b8ba"/><circle cx="44" cy="44" r="1.500" fill="#333"/></svg></div>
  <div class="app on"><svg viewBox="0 0 88 88"><use href="#chrome"/></svg></div>
  <i class="sep"></i>
  <div class="app on"><svg viewBox="0 0 88 88"><use href="#telegram"/></svg></div>
  <div class="app on"><svg viewBox="0 0 88 88"><rect width="88" height="88" rx="21" fill="url(#gFrame)"/><rect x="3.500" y="3.500" width="81" height="81" rx="18" fill="#000"/><rect x="10" y="10" width="68" height="68" rx="12" fill="#262627"/><path d="m17 18 8 5-8 5" fill="none" stroke="#fff" stroke-width="3"/><path d="M30.500 33.500h12.500" stroke="#fff" stroke-width="3"/></svg></div>
  <div class="app"><svg viewBox="0 0 88 88"><rect width="88" height="88" rx="20" fill="#fff"/><circle cx="44" cy="2" r="8.500" fill="none" stroke="#a9b1b6" stroke-width="2"/><path d="M41 12 36 26C28 34 8 42 7.500 58 7 67 12 72 16 77c-3-7-6-12-4-19C16 46 34 38 38 30l6-14 6 14c4 8 22 16 26 28 2 7-1 12-4 19 4-5 9-10 8.500-19C80 42 60 34 52 26L47 12z" fill="#c1c9cd" stroke="#7e878c" stroke-width="1"/><path d="M32 22.500h50" stroke="#777f84" stroke-width="1.800"/><circle cx="35" cy="22.500" r="3" fill="#70787d"/><circle cx="54" cy="22.500" r="3" fill="#70787d"/><path d="M62 19v7M66 18v9M81 20v5" stroke="#555d61" stroke-width="2"/><rect x="38" y="5" width="12" height="9" rx="3" fill="#9aa4aa"/><path d="M28 54.500h32l3 22H25z" fill="#313336"/><path d="M35 59h18M32 63.500h24M31 68h27" stroke="#85888b" stroke-width="1.300" stroke-dasharray="2.500 1"/><path d="M30.500 77v10M37.500 77v12M44.500 77v12M51.500 77v12M58.500 77v10" stroke="#9b9da0" stroke-width="3.500"/></svg></div>
  <div class="app on"><svg viewBox="0 0 88 88"><use href="#vscode"/></svg></div>
  <div class="app on"><svg viewBox="0 0 88 88"><use href="#monitor"/></svg></div>
  <i class="sep"></i>
  <div class="app"><svg viewBox="0 0 88 88"><path d="M4.500 6h78l-10 80c-1 8-57 8-59 0z" fill="url(#gBin)"/><ellipse cx="43.500" cy="6" rx="39" ry="9" fill="#aeb0b2"/><path d="m8 7 4-10 10 3 8-8 8 7 6 4 9-11 8 8 9 0 6 9-9 5-26 2-27-4z" fill="#e8e8e8"/><path d="m16 9 6-8 6 9zM58 8l6-9 8 12zM34 10l3-8 3 10z" fill="#777b7e"/><path d="m24 5 11-3 1 7z" fill="#4ba6d0"/><path d="m50 9 2-10 10 11z" fill="#914f39"/><path d="m52-1 5 4 4 7-9-5z" fill="#36547d"/><path d="m27 8 4-2 6 2-7 4z" fill="#59bb5c"/><path d="M4.500 6c4 12 74 12 78 0" fill="none" stroke="#f4f4f5" stroke-width="1.500"/><path d="M55 29c-6 6-16 6-22 2M22 42c10-7 17-1 23-8M61 52c-8 7-18 2-25 10" fill="none" stroke="#f5f5f5" stroke-width="4" opacity=".55"/><path d="M18 82c9 7 43 7 52 0" fill="none" stroke="#fafafa" stroke-width="4" opacity=".7"/></svg></div>
</div>
</body>
</html>
```
FILE: styles.css
```css
* { box-sizing: border-box; margin: 0; padding: 0; }
body {
  width: 3024px; height: 1964px; overflow: hidden;
  background: #08090b;
  font-family: Inter, "Liberation Sans", sans-serif;
  color: #262626;
  display: flex; flex-direction: column;
}
svg { display: block; overflow: visible; flex: none; }
i, em { font-style: normal; }
.defs { position: absolute; }
.svgtext { font-family: Inter, "Liberation Sans", sans-serif; }
.nov { font-size: 18px; font-weight: 600; fill: #fff; }
.ten { font-size: 55px; font-weight: 300; fill: #222; letter-spacing: -2px; }
.tv { font-size: 40px; font-weight: 500; fill: #fff; letter-spacing: -1px; }

/* Menu bar */
.menubar {
  height: 76px; flex: none; background: linear-gradient(90deg, #0b0c0e, #020303);
  color: #fff; font-size: 26px; font-weight: 500; white-space: nowrap;
  display: flex; align-items: center; padding: 0 32px 4px 41px;
}
.apple { width: 26px; height: 31px; margin-top: -2px; }
.menus { display: flex; margin-left: 41px; letter-spacing: -.45px; }
.menus b { font-weight: 700; letter-spacing: .1px; }
.m-app { width: 248px; } .m-file { width: 84px; } .m-edit { width: 87px; } .m-view { width: 100px; } .m-window { width: 138px; }
.status { display: flex; align-items: center; margin-left: auto; color: #e6e6e6; }
.s-tg { width: 42px; height: 38px; margin: 3px 32px 0 0; }
.s-play { width: 30px; height: 30px; margin-right: 34px; }
.s-bat { width: 52px; height: 26px; margin: 2px 37px 0 0; }
.s-wifi { width: 36px; height: 26px; margin-right: 39px; }
.s-find { width: 26px; height: 26px; margin: 2px 40px 0 0; }
.s-cc { width: 27px; height: 28px; margin: 1px 36px 0 0; }
.date { width: 156px; letter-spacing: -.2px; }
.time { width: 72px; }

/* Window */
.window {
  height: 1736px; flex: none; background: #fff; border-radius: 20px; overflow: hidden;
  display: flex; flex-direction: column;
}
.toolbar {
  height: 106px; flex: none; background: #f0f0f0; border-bottom: 2px solid #dadada;
  box-shadow: inset 0 2px #fafafa;
  display: flex; align-items: center; padding: 0 24px 0 40px;
}
.lights { display: flex; gap: 16px; }
.lights i { width: 24px; height: 24px; border-radius: 50%; border: 1px solid #0002; }
.red { background: #ec6a5e; } .yellow { background: #f4bf4f; } .green { background: #61c554; }
.titles { width: 812px; padding-left: 38px; }
.titles h1 { font-size: 26px; line-height: 32px; font-weight: 700; letter-spacing: .1px; color: #474747; }
.titles p { font-size: 22px; line-height: 27px; color: #747474; letter-spacing: -.1px; }
.actions { display: flex; align-items: center; width: 274px; }
.actions svg { width: 36px; height: 36px; }
.a-info { margin-left: 41px; }
.a-more { margin: 2px 0 0 46px; }
.actions .a-chev { width: 16px; height: 12px; margin: 2px 0 0 14px; }
.a-stop { margin-left: -1px; }
.tabs {
  height: 56px; display: flex; border: 2px solid #e5e5e5; border-radius: 12px;
  font-size: 26px; font-weight: 500; line-height: 50px; color: #636363; text-align: center; letter-spacing: -.4px;
}
.tabs span { position: relative; }
.t-cpu { width: 86px; margin: -2px 0 -2px -2px; line-height: 54px; background: #e2e2e2; border-radius: 12px; color: #3c3c3c; }
.t-mem { width: 135px; } .t-en { width: 120px; } .t-disk { width: 88px; } .t-net { width: 135px; }
.t-mem::after, .t-en::after, .t-disk::after { content: ""; position: absolute; right: 0; top: 6px; width: 2px; height: 40px; background: #e2e2e2; }
.search {
  width: 650px; height: 56px; margin-left: auto; border: 2px solid #e6e6e6; border-radius: 12px;
  display: flex; align-items: center; padding-left: 12px; font-size: 26px; color: #b6b6b6;
}
.search svg { width: 26px; height: 26px; margin: 0 14px 0 0; }
.search span { padding-top: 5px; }

.thead, .row { display: grid; font-size: 22px; white-space: nowrap; }
.thead {
  height: 52px; flex: none; border-bottom: 2px solid #e3e3e3; letter-spacing: .05px;
  grid-template-columns: 250px 184px 174px 154px 230px 210px 184px 184px 114px 188px;
  align-items: center; text-align: center;
}
.thead > span { height: 32px; line-height: 31px; border-right: 2px solid #e3e3e3; }
.thead b { font-weight: 600; }
.thead .h-name { padding-left: 33px; }
.h-user { padding-left: 6px; }
.h-sort { display: flex; align-items: center; justify-content: flex-end; padding-right: 16px; }
.h-sort b { margin-right: 39px; }
.h-sort svg { width: 14px; height: 10px; margin-top: 2px; }

.rows { height: 1344px; flex: none; padding: 10px 20px 0; overflow: hidden; }
.row {
  height: 48px; line-height: 49px; border-radius: 10px;
  grid-template-columns: 230px 184px 173px 154px 230px 210px 184px 184px 113px 188px;
  font-variant-numeric: tabular-nums;
}
.row:nth-child(even) { background: #f4f6f5; }
.row span { text-align: right; padding-right: 21px; }
.row span:nth-child(4), .row span:nth-child(9) { letter-spacing: -.6px; }
.row em { padding-left: 22px; }
.name { display: flex; align-items: center; padding-left: 36px; height: 48px; }
.name i { width: 28px; height: 28px; margin-right: 24px; }
.name svg { width: 28px; height: 28px; filter: drop-shadow(0 1px 1px #0003); }

/* Summary */
.summary {
  flex: 1; border-top: 2px solid #c6c6c6;
  background: linear-gradient(90deg, #eaeaea 0, #eaeaea00 6%, #eaeaea00 94%, #eaeaea 100%), linear-gradient(#ebebeb 0 50%, #e2e2e2 75%, #cecece);
  display: flex; justify-content: center; align-items: flex-start; padding-top: 24px;
}
.card {
  width: 1160px; height: 180px; border: 2px solid #c4c4c4; border-radius: 10px;
  background: linear-gradient(#fff 60%, #f1f1f1); display: flex; font-size: 22px;
}
.stats.left { width: 393px; padding: 6px 17px 0 15px; }
.stats.right { flex: 1; padding: 6px 16px 0 17px; }
.stat { height: 42px; border-bottom: 2px solid #c6c6c6; display: flex; justify-content: space-between; padding: 9px 7px 0 7px; line-height: 27px; }
.stat + .stat { height: 40px; padding-top: 7px; }
.left .stat { padding-right: 2px; }
.right .stat { padding-left: 2px; }
.stat.last { border: 0; }
.sys { color: #ea4a3c; } .usr { color: #6cb7ea; }
.load { width: 369px; border: solid #c4c4c4; border-width: 0 2px; display: flex; flex-direction: column; align-items: center; }
.load h2 { width: 320px; height: 46px; border-bottom: 2px solid #c6c6c6; text-align: center; font-size: 18px; font-weight: 700; color: #808080; line-height: 43px; letter-spacing: .5px; }
.load svg { width: 356px; height: 114px; margin-top: 14px; }
.line { vector-effect: non-scaling-stroke; stroke-width: 2px; }
.blue { fill: none; stroke: #72bbea; } .crimson { stroke: #e74f41; }

/* Dock */
.dock {
  width: 2824px; height: 140px; margin: 2px 0 0 100px; flex: none;
  border: 2px solid #747475; border-radius: 48px;
  background: linear-gradient(90deg, #606165, #575958 20%, #5f6063 35%, #535353 45%, #575a5b 60%, #58595b 80%, #575959);
  display: flex; gap: 29.65px; padding: 18px 0 0 19px;
}
.app { position: relative; width: 88px; height: 89px; flex: none; }
.app svg { width: 88px; height: 89px; filter: drop-shadow(0 2px 2px #0004); }
.on::after { content: ""; position: absolute; left: 39px; top: 108px; width: 8px; height: 8px; border-radius: 50%; background: #000; }
.sep { width: 2px; height: 104px; margin: -2px 11px 0; background: #2b2c2d; flex: none; }
.petals rect { mix-blend-mode: multiply; opacity: .92; }
```
